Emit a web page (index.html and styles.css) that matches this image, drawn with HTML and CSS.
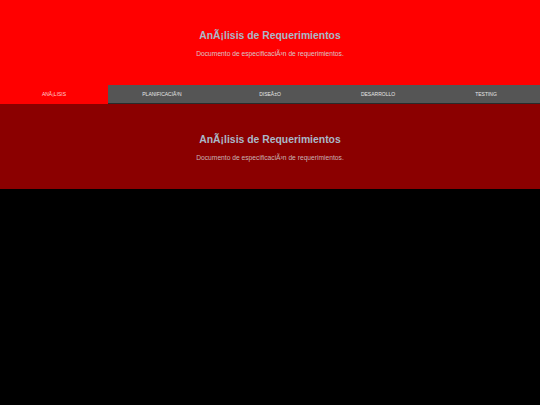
FILE: index.html
```html
<!DOCTYPE html>
<html lang="es">
<head>
<meta charset="utf-8">
<title>Análisis</title>
<link rel="stylesheet" href="styles.css">
</head>
<body>
<header class="hero">
  <h1 class="title">AnÃ¡lisis de Requerimientos</h1>
  <p class="subtitle">Documento de especificaciÃ³n de requerimientos.</p>
</header>
<nav class="tabs">
  <a class="tab active">ANÃ¡LISIS</a>
  <a class="tab">PLANIFICACIÃ³N</a>
  <a class="tab">DISEÃ±O</a>
  <a class="tab">DESARROLLO</a>
  <a class="tab">TESTING</a>
</nav>
<section class="panel">
  <h2 class="title">AnÃ¡lisis de Requerimientos</h2>
  <p class="subtitle">Documento de especificaciÃ³n de requerimientos.</p>
</section>
</body>
</html>
```
FILE: styles.css
```css
html, body {
  margin: 0;
  padding: 0;
  background: #000;
  font-family: "Liberation Sans", Arial, sans-serif;
}
.hero {
  background: #ff0000;
  height: 84px;
  display: flex;
  flex-direction: column;
  align-items: center;
  padding-top: 29px;
  box-sizing: border-box;
}
.panel {
  background: #8b0000;
  height: 85px;
  display: flex;
  flex-direction: column;
  align-items: center;
  padding-top: 29px;
  box-sizing: border-box;
}
.title {
  margin: 0;
  font-size: 10.4px;
  font-weight: bold;
  color: #a9b8c8;
  line-height: 14px;
}
.subtitle {
  margin: 6px 0 0;
  font-size: 6.7px;
  line-height: 9px;
  color: #d9c4c8;
}
.panel .subtitle {
  color: #c9b4b6;
}
.tabs {
  display: flex;
  height: 20px;
  background: linear-gradient(#ff0000 1px, #8b0000 1px);
}
.tab {
  flex: 1;
  display: flex;
  align-items: center;
  justify-content: center;
  margin-top: 1px;
  height: 18px;
  background: #555555;
  border-bottom: 1px solid #2a2a2a;
  color: #e6e6e6;
  font-size: 5px;
  text-decoration: none;
}
.tab.active {
  margin-top: 0;
  height: 20px;
  border-bottom: 0;
  background: #ff0000;
  color: #ffd0d0;
}
```
